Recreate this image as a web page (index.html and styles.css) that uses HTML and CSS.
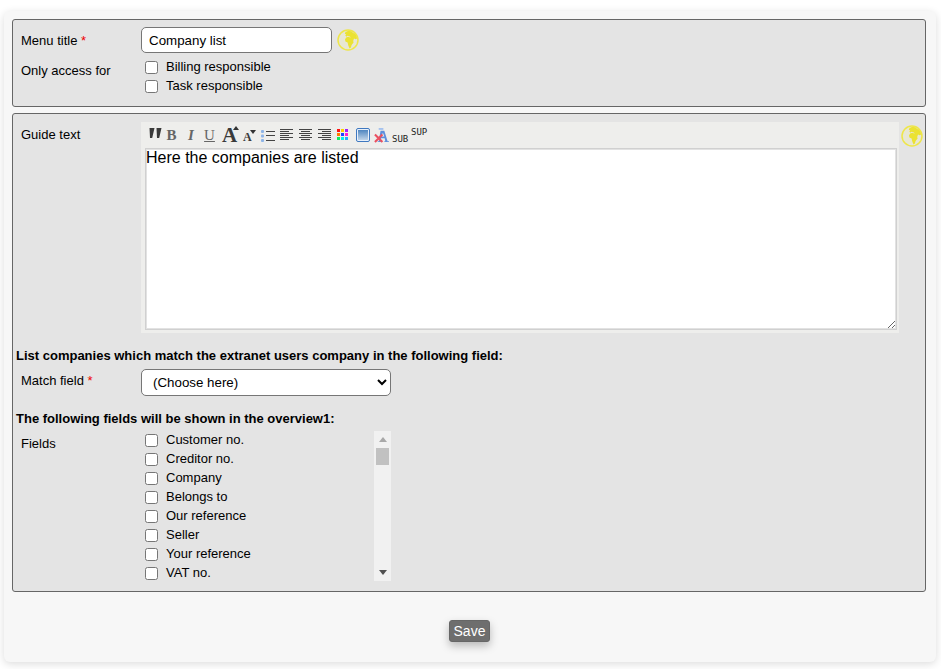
FILE: index.html
```html
<!DOCTYPE html>
<html lang="en">
<head>
<meta charset="utf-8">
<title>Company list</title>
<link rel="stylesheet" href="styles.css">
</head>
<body>
<svg class="defs" width="0" height="0" aria-hidden="true">
  <symbol id="globe" viewBox="0 0 24 24">
    <circle cx="12" cy="12" r="10" fill="#f2efb0" fill-opacity=".3" stroke="#eee64a" stroke-width="1.500"/>
    <path fill="#ebe232" d="M9.500 4l3-1.200 3.500.7 1 1.500 2 .5 1.500 2.500.6 2.500-1.600.8-1.500-.8-.8 2.500.4 1.500-2 2.500-.7 2.500-1.400 1-1.200-3-.7-3-2.200-1-.4-2.300 1.500-2 2.500-.4.8.8 1-.4-1.500-1-1.800-.4-1 .9-1.200-1.100 1-1.400-1.500-.3z"/>
  </symbol>
</svg>
<main class="card">
  <section class="panel panel-top">
    <div class="row row-title">
      <div class="label">Menu title <span class="req">*</span></div>
      <input class="text-input" type="text" value="Company list">
      <svg class="globe globe-title"><use href="#globe"/></svg>
    </div>
    <div class="row row-access">
      <div class="label label-access">Only access for</div>
      <div class="checks">
        <label class="check"><input type="checkbox"><span>Billing responsible</span></label>
        <label class="check"><input type="checkbox"><span>Task responsible</span></label>
      </div>
    </div>
  </section>

  <section class="panel panel-main">
    <div class="row row-guide">
      <div class="label label-guide">Guide text</div>
      <div class="editor">
        <div class="toolbar">
          <svg class="ti w-quote" viewBox="0 0 14 11"><path fill="#3a3a3a" d="M1.500 0h5L4.200 10H2zM8.500 0h5l-2.300 10H9z"/></svg>
          <span class="ti w-b">B</span>
          <span class="ti w-i">I</span>
          <span class="ti w-u">U</span>
          <span class="ti w-big">A<svg class="caret caret-up" viewBox="0 0 6 4"><path fill="#333" d="M3 0l3 4H0z"/></svg></span>
          <span class="ti w-small">A<svg class="caret caret-down" viewBox="0 0 6 4"><path fill="#333" d="M0 0h6L3 4z"/></svg></span>
          <svg class="ti w-list" viewBox="0 0 14 13"><g fill="#8db4e8"><rect y="1" width="3" height="3" rx="1"/><rect y="5.500" width="3" height="3" rx="1"/><rect y="10" width="3" height="3" rx="1"/></g><g fill="#444"><rect x="5" y="2" width="9" height="1"/><rect x="5" y="6" width="9" height="1"/><rect x="5" y="11" width="9" height="1"/></g></svg>
          <svg class="ti w-align" viewBox="0 0 13 12"><path fill="#444" d="M0 0h13v1H0zM0 2h9v1H0zM0 4h13v1H0zM0 6h9v1H0zM0 8h13v1H0zM0 10h9v1H0z"/></svg>
          <svg class="ti w-align" viewBox="0 0 13 12"><path fill="#444" d="M0 0h13v1H0zM2 2h9v1H2zM0 4h13v1H0zM2 6h9v1H2zM0 8h13v1H0zM2 10h9v1H2z"/></svg>
          <svg class="ti w-align" viewBox="0 0 13 12"><path fill="#444" d="M0 0h13v1H0zM4 2h9v1H4zM0 4h13v1H0zM4 6h9v1H4zM0 8h13v1H0zM4 10h9v1H4z"/></svg>
          <svg class="ti w-color" viewBox="0 0 11 11"><rect width="3" height="3" fill="#ff1414"/><rect x="4" width="3" height="3" fill="#ffd000"/><rect x="8" width="3" height="3" fill="#a020ff"/><rect y="4" width="3" height="3" fill="#ff8000"/><rect x="4" y="4" width="3" height="3" fill="#2040ff"/><rect x="8" y="4" width="3" height="3" fill="#ff20d0"/><rect y="8" width="3" height="3" fill="#10f060"/><rect x="4" y="8" width="3" height="3" fill="#00f0f0"/><rect x="8" y="8" width="3" height="3" fill="#20b0ff"/></svg>
          <svg class="ti w-image" viewBox="0 0 14 14"><defs><linearGradient id="imgfill" x1="0" y1="0" x2="0" y2="1"><stop offset="0" stop-color="#4f86c0"/><stop offset="1" stop-color="#c0d4e8"/></linearGradient></defs><rect x=".5" y=".5" width="13" height="13" rx="1.500" fill="#e8f0fa" stroke="#3f78c0"/><rect x="2" y="2" width="10" height="10" fill="url(#imgfill)"/></svg>
          <svg class="ti w-clear" viewBox="0 0 16 16"><path fill="#5f8fdc" d="M7 3h4l3.500 11H16v1h-5v-1h1l-.6-3H7.500L7 14h1v1H4v-1h1zM8 9h3L9.500 5z"/><path fill="#a5c2ee" d="M5 0h5v2H5z"/><path fill="none" stroke="#ea5060" stroke-width="2.200" d="M1 7l8 8M9 7l-8 8"/></svg>
          <span class="ti w-sub">SUB</span>
          <span class="ti w-sup">SUP</span>
        </div>
        <textarea class="area">Here the companies are listed</textarea>
      </div>
      <svg class="globe globe-guide"><use href="#globe"/></svg>
    </div>

    <h2 class="heading heading-match">List companies which match the extranet users company in the following field:</h2>
    <div class="row row-match">
      <div class="label">Match field <span class="req">*</span></div>
      <select class="select"><option>(Choose here)</option></select>
    </div>

    <h2 class="heading heading-fields">The following fields will be shown in the overview1:</h2>
    <div class="row row-fields">
      <div class="label label-fields">Fields</div>
      <div class="scroller">
        <div class="checks list">
          <label class="check"><input type="checkbox"><span>Customer no.</span></label>
          <label class="check"><input type="checkbox"><span>Creditor no.</span></label>
          <label class="check"><input type="checkbox"><span>Company</span></label>
          <label class="check"><input type="checkbox"><span>Belongs to</span></label>
          <label class="check"><input type="checkbox"><span>Our reference</span></label>
          <label class="check"><input type="checkbox"><span>Seller</span></label>
          <label class="check"><input type="checkbox"><span>Your reference</span></label>
          <label class="check"><input type="checkbox"><span>VAT no.</span></label>
        </div>
        <div class="scrollbar">
          <svg class="arrow" viewBox="0 0 8 5"><path fill="#a8a8a8" d="M4 0l4 5H0z"/></svg>
          <div class="thumb"></div>
          <svg class="arrow arrow-down" viewBox="0 0 8 5"><path fill="#505050" d="M0 0h8L4 5z"/></svg>
        </div>
      </div>
    </div>
  </section>

  <div class="actions"><button class="save" type="button">Save</button></div>
</main>
</body>
</html>
```

FILE: styles.css
```css
* { box-sizing: border-box; }

html, body { margin: 0; padding: 0; background: #fff; }

body {
  padding: 11px 5px 7px 4px;
  font-family: "Liberation Sans", Arial, sans-serif;
  font-size: 13px;
  color: #000;
  overflow: hidden;
}

.defs { position: absolute; }

.card {
  height: 651px;
  padding: 8px 10px 0 8px;
  background: #f7f7f7;
  border-radius: 6px;
  box-shadow: 0 2px 8px rgba(0, 0, 0, .14);
  display: flex;
  flex-direction: column;
}

.panel {
  background: #e4e4e4;
  border: 1px solid #666;
  border-radius: 3px;
}

.panel-top { height: 88px; padding: 7px 8px 0 8px; }

.panel-main { height: 479px; margin-top: 6px; padding: 8px 1px 0 3px; }

.row { display: flex; align-items: flex-start; }

.label { width: 120px; flex: none; line-height: 14px; }

.req { color: #e00; }

.row-title .label { padding-top: 7px; }

.text-input {
  width: 191px;
  height: 26px;
  padding: 0 7px;
  border: 1px solid #767676;
  border-radius: 5px;
  background: #fff;
  font: 13.333px "Liberation Sans", Arial, sans-serif;
  color: #000;
}

.globe { display: block; flex: none; width: 24px; height: 24px; }

.globe-title { margin-left: 4px; margin-top: 1px; }

.row-access { margin-top: 5px; }

.label-access { padding-top: 6px; }

.checks { display: flex; flex-direction: column; padding-left: 4px; }

.check { display: flex; align-items: center; height: 19px; line-height: 14px; }

.check input {
  width: 13px;
  height: 13px;
  margin: 0 8px 1px 0;
  flex: none;
  appearance: none;
  background: #fff;
  border: 1px solid #767676;
  border-radius: 2.500px;
}

.check span { margin-top: -1px; }

.row-guide { padding-left: 5px; }

.label-guide { padding-top: 6px; }

.editor {
  width: 759px;
  height: 211px;
  background: #eeeeec;
  padding: 0 2px 3px 4px;
  display: flex;
  flex-direction: column;
}

.toolbar {
  height: 26px;
  flex: none;
  display: flex;
  align-items: center;
  padding-left: 3px;
  color: #444;
}

.ti { display: block; flex: none; position: relative; }

.w-quote { width: 14px; height: 11px; margin-right: 4px; margin-top: -3px; }

.w-b, .w-i, .w-u { font: 15px/16px "Liberation Serif", serif; color: #666; text-align: center; }
.w-b { width: 11px; font-weight: bold; margin-right: 9px; }
.w-i { width: 10px; font-style: italic; font-weight: bold; margin-right: 8px; }
.w-u { width: 11px; text-decoration: underline; margin-right: 7px; font-weight: normal; }

.w-big { width: 16px; margin-right: 5px; font: bold 21px/18px "Liberation Serif", serif; color: #3a3a3a; }
.w-small { width: 11px; margin-right: 7px; margin-top: 4px; font: bold 12px/12px "Liberation Serif", serif; color: #3a3a3a; }

.caret { position: absolute; width: 6px; height: 4px; }
.caret-up { right: -1px; top: 0; }
.caret-down { right: -2px; top: -1px; }

.w-list { width: 14px; height: 13px; margin-right: 5px; }
.w-align { width: 13px; height: 12px; margin-right: 6px; }
.w-color { width: 11px; height: 11px; margin-right: 8px; margin-top: -1px; }
.w-image { width: 14px; height: 14px; margin-right: 4px; margin-top: -1px; }
.w-clear { width: 15px; height: 15px; margin-right: 3px; }

.w-sub, .w-sup { width: 18px; font: 9px/10px "DejaVu Sans Mono", monospace; color: #222; }
.w-sub { margin-top: 8px; margin-right: 1px; }
.w-sup { margin-top: -7px; }

.area {
  flex: 1;
  display: block;
  width: 100%;
  margin: 0;
  padding: 0;
  border: 1px solid #d0d0d0;
  box-shadow: 0 0 0 1px #e2e2e2 inset;
  border-radius: 0;
  background: #fff;
  font: 16px/18px "Liberation Sans", Arial, sans-serif;
  color: #000;
  outline: none;
  resize: both;
}

.globe-guide { margin-left: 1px; margin-top: 2px; }

.heading { margin: 0; font-size: 13px; font-weight: bold; line-height: 14px; }

.heading-match { margin-top: 16px; }

.row-match { margin-top: 6px; padding-left: 5px; }

.row-match .label { padding-top: 5px; }

.select {
  width: 250px;
  height: 27px;
  padding: 0 7px;
  border: 1px solid #767676;
  border-radius: 5px;
  background: #fff;
  font: 13.333px "Liberation Sans", Arial, sans-serif;
  color: #000;
}

.heading-fields { margin-top: 16px; }

.row-fields { margin-top: 5px; padding-left: 5px; }

.label-fields { padding-top: 6px; }

.scroller { width: 250px; height: 150px; display: flex; justify-content: space-between; }

.list { height: 152px; }

.scrollbar {
  width: 17px;
  height: 150px;
  background: #f1f1f1;
  display: flex;
  flex-direction: column;
  align-items: center;
}

.arrow { display: block; width: 8px; height: 5px; margin-top: 6px; flex: none; }

.thumb { width: 13px; height: 17px; margin-top: 6px; background: #c1c1c1; flex: none; }

.arrow-down { margin-top: auto; margin-bottom: 6px; }

.actions { flex: 1; display: flex; justify-content: center; padding-top: 28px; padding-left: 1px; }

.save {
  width: 41px;
  height: 22px;
  padding: 0;
  border: 1px solid #666;
  border-radius: 3px;
  background: #6e6e6e;
  color: #fff;
  font: 14px "Liberation Sans", Arial, sans-serif;
  box-shadow: 0 4px 8px rgba(0, 0, 0, .25);
}
```
